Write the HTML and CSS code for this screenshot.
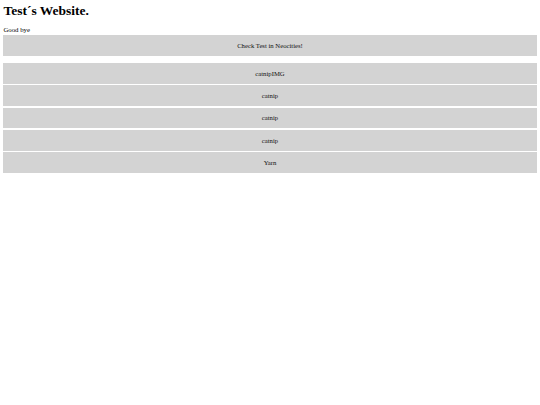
FILE: index.html
```html
<!DOCTYPE html>
<html lang="en">
<head>
<meta charset="utf-8">
<title>Test´s Website.</title>
<link rel="stylesheet" href="styles.css">
</head>
<body>
<h1 class="title">Test´s Website.</h1>
<div class="note">Good bye</div>
<div class="link-box link-box--top">Check Test in Neocities!</div>
<div class="list">
  <div class="link-box">catnipIMG</div>
  <div class="link-box">catnip</div>
  <div class="link-box">catnip</div>
  <div class="link-box">catnip</div>
  <div class="link-box">Yarn</div>
</div>
</body>
</html>
```
FILE: styles.css
```css
html {
  background: #ffffff;
}
body {
  margin: 3.2px;
  font-family: "Liberation Serif", "Times New Roman", serif;
  color: #000000;
}
.title {
  font-size: 13.5px;
  font-weight: bold;
  margin: 0 0 7.3px 0.2px;
  line-height: 15.5px;
}
.note {
  font-size: 6.8px;
  line-height: 7.7px;
  margin-left: 0.2px;
  margin-bottom: 1.1px;
}
.link-box {
  background: #d3d3d3;
  height: 20.8px;
  display: flex;
  align-items: center;
  justify-content: center;
  font-size: 6.7px;
  color: #111111;
}
.link-box--top {
  margin-bottom: 7.2px;
}
.list {
  display: flex;
  flex-direction: column;
  gap: 1.6px;
}
```
